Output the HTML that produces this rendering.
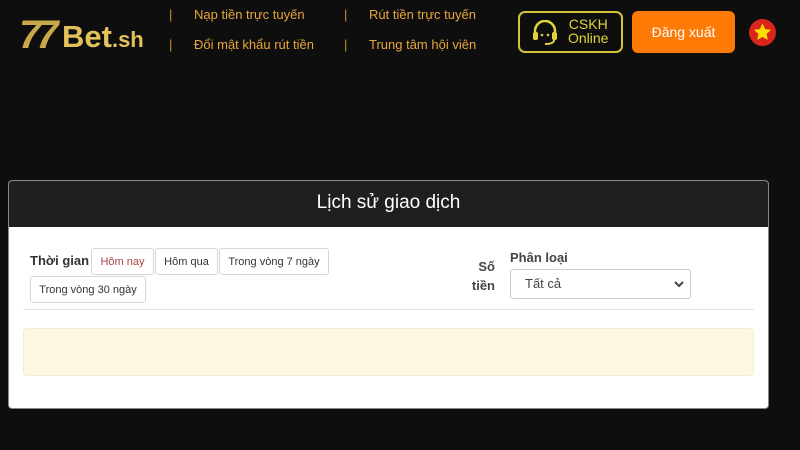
<!DOCTYPE html>
<html><head><meta charset="utf-8"><style>
*{margin:0;padding:0;box-sizing:border-box}
body{width:800px;height:450px;background:#0e0e0e;font-family:"Liberation Sans",sans-serif;position:relative;overflow:hidden}
.a{position:absolute}
.nav{color:#e9a63a;font-size:13px}
.bar{color:#c9952e;font-size:13px}
.btn{position:absolute;top:248px;height:27px;border:1px solid #d6d6d6;border-radius:3px;background:#fff;font-size:11px;color:#333;line-height:26px;text-align:center}
</style></head><body>
<div class="a" style="left:19px;top:14px;font-size:40px;font-weight:bold;font-style:italic;color:#c9a84a;letter-spacing:-5px;line-height:42px">77</div>
<div class="a" style="left:62px;top:20px;font-size:31px;font-weight:bold;color:#e2c25a;line-height:34px">Bet<span style="font-size:22px">.sh</span></div>
<div class="a bar" style="left:169px;top:7px">|</div>
<div class="a bar" style="left:169px;top:37px">|</div>
<div class="a bar" style="left:344px;top:7px">|</div>
<div class="a bar" style="left:344px;top:37px">|</div>
<div class="a nav" style="left:194px;top:7px">Nạp tiền trực tuyến</div>
<div class="a nav" style="left:194px;top:37px">Đổi mật khẩu rút tiền</div>
<div class="a nav" style="left:369px;top:7px">Rút tiền trực tuyến</div>
<div class="a nav" style="left:369px;top:37px">Trung tâm hội viên</div>
<div class="a" style="left:518px;top:11px;width:105px;height:42px;border:2px solid #d4c43a;border-radius:7px"></div>
<svg class="a" style="left:530px;top:20px" width="30" height="26" viewBox="0 0 30 26"><path d="M5 14V11a10 10 0 0 1 20 0v3" fill="none" stroke="#e0d33a" stroke-width="2.5"/><rect x="3" y="12" width="5" height="8" rx="2" fill="#e0d33a"/><rect x="22" y="12" width="5" height="8" rx="2" fill="#e0d33a"/><circle cx="12" cy="15" r="1.3" fill="#e0d33a"/><circle cx="18" cy="15" r="1.3" fill="#e0d33a"/><path d="M24 20q0 4-9 4" fill="none" stroke="#e0d33a" stroke-width="2"/></svg>
<div class="a" style="left:568px;top:17px;color:#e0d33a;font-size:14px;line-height:14px;text-align:center">CSKH<br>Online</div>
<div class="a" style="left:632px;top:11px;width:103px;height:42px;background:#fd7a07;border-radius:6px;color:#fff;font-size:14px;line-height:42px;text-align:center">Đăng xuất</div>
<svg class="a" style="left:749px;top:19px" width="27" height="27" viewBox="0 0 27 27"><circle cx="13.5" cy="13.5" r="13.5" fill="#da251d"/><path d="M13.5 4.5l2.6 5.6 6 .7-4.5 4.1 1.2 6-5.3-3-5.3 3 1.2-6-4.5-4.1 6-.7z" fill="#ffde00"/></svg>

<div class="a" style="left:8px;top:180px;width:761px;height:229px;background:#fff;border-radius:4px;overflow:hidden;border:1px solid #888">
<div style="height:46px;background:#1f1f1f;color:#fff;font-size:19px;text-align:center;line-height:44px">Lịch sử giao dịch</div>
</div>
<div class="a" style="left:30px;top:253px;font-size:13px;font-weight:bold;color:#333">Thời gian</div>
<div class="btn" style="left:91px;width:63px;color:#a84444">Hôm nay</div>
<div class="btn" style="left:155px;width:63px">Hôm qua</div>
<div class="btn" style="left:219px;width:110px">Trong vòng 7 ngày</div>
<div class="btn" style="left:30px;top:276px;width:116px">Trong vòng 30 ngày</div>
<div class="a" style="left:470px;top:257px;width:25px;font-size:13px;font-weight:bold;color:#444;text-align:right;line-height:19px">Số<br>tiền</div>
<div class="a" style="left:510px;top:250px;font-size:13px;font-weight:bold;color:#444">Phân loại</div>
<div class="a" style="left:510px;top:269px;width:181px;height:30px;border:1px solid #ccc;border-radius:3px;font-size:13px;color:#444;line-height:28px;padding-left:14px">Tất cả</div>
<svg class="a" style="left:673px;top:280px" width="12" height="8"><path d="M2 2l4 4 4-4" fill="none" stroke="#444" stroke-width="2"/></svg>
<div class="a" style="left:23px;top:309px;width:731px;height:1px;background:#e2e2e2"></div>
<div class="a" style="left:23px;top:328px;width:731px;height:48px;background:#fdf6e3;border:1px solid #f6edd0;border-radius:4px"></div>
</body></html>
